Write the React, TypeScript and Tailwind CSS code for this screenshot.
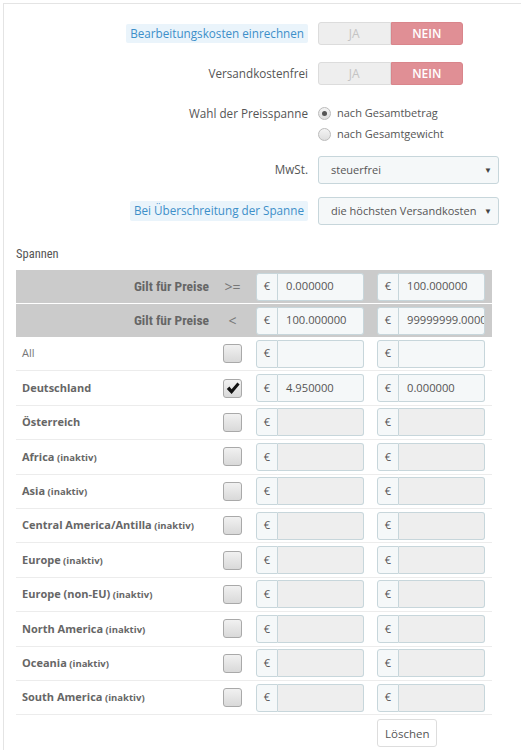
import React from 'react';

type Zone = { name: string; inactive?: boolean; plain?: boolean; checked?: boolean; from?: string; to?: string; enabled?: boolean };

const zones: Zone[] = [
  { name: 'All', plain: true, enabled: true },
  { name: 'Deutschland', checked: true, from: '4.950000', to: '0.000000', enabled: true },
  { name: 'Österreich' },
  { name: 'Africa', inactive: true },
  { name: 'Asia', inactive: true },
  { name: 'Central America/Antilla', inactive: true },
  { name: 'Europe', inactive: true },
  { name: 'Europe (non-EU)', inactive: true },
  { name: 'North America', inactive: true },
  { name: 'Oceania', inactive: true },
  { name: 'South America', inactive: true },
];

const narrow = { fontFamily: '"Liberation Sans Narrow", "Roboto Condensed", "Open Sans", sans-serif' };

function Toggle() {
  return (
    <div className="flex h-[23px] w-[145px] text-[12px]">
      <div className="flex flex-1 items-center justify-center rounded-l-[3px] border border-[#dcdcdc] bg-[#eeeeee] text-[#c4c4c4]">
        JA
      </div>
      <div className="flex flex-1 items-center justify-center rounded-r-[3px] border border-[#d9858b] bg-[#e08f95] font-semibold text-white">
        NEIN
      </div>
    </div>
  );
}

function Radio({ checked, label }: { checked?: boolean; label: string }) {
  return (
    <div className="flex h-[16px] items-center gap-[6px]">
      <span className="flex h-[13px] w-[13px] items-center justify-center rounded-full border border-[#bbb] bg-gradient-to-b from-[#f4f4f4] to-[#dedede]">
        {checked && <span className="h-[5px] w-[5px] rounded-full bg-[#555]" />}
      </span>
      <span className="text-[11px] text-[#555]">{label}</span>
    </div>
  );
}

function Select({ value }: { value: string }) {
  return (
    <div className="flex h-[28px] w-[181px] items-center justify-between whitespace-nowrap rounded-[3px] border border-[#c7d6db] bg-[#f5f8f9] pl-[12px] pr-[6px] text-[11px] text-[#555]">
      <span>{value}</span>
      <span className="text-[8px] text-[#444]">▼</span>
    </div>
  );
}

function FormRow({ label, hint, children, align = 'center' }: { label: string; hint?: boolean; children: React.ReactNode; align?: 'center' | 'start' }) {
  return (
    <div className={`flex ${align === 'center' ? 'items-center' : 'items-start'}`}>
      <div className="flex w-[304px] justify-end">
        {hint ? (
          <span className="rounded-[2px] bg-[#eaf4fb] px-[4px] py-[1px] text-[11.7px] text-[#3d8fc9]">{label}</span>
        ) : (
          <span className="text-[11.7px] text-[#555]">{label}</span>
        )}
      </div>
      <div className="ml-[10px]">{children}</div>
    </div>
  );
}

function PriceInput({ value, disabled }: { value?: string; disabled?: boolean }) {
  return (
    <div className="flex h-[28px] w-[108px]">
      <div className="flex w-[22px] items-center justify-center rounded-l-[3px] border border-[#c7d6db] bg-[#f5f8f9] text-[11px] text-[#555]">
        €
      </div>
      <div
        className={`flex flex-1 items-center overflow-hidden whitespace-nowrap rounded-r-[3px] border border-l-0 border-[#c7d6db] pl-[8px] text-[11.2px] text-[#555] ${
          disabled ? 'bg-[#eeeeee]' : 'bg-[#f5f8f9]'
        }`}
      >
        {value}
      </div>
    </div>
  );
}

function Checkbox({ checked }: { checked?: boolean }) {
  return (
    <span className="flex h-[19px] w-[19px] items-center justify-center rounded-[3px] border border-[#a9a9a9] bg-gradient-to-b from-[#f1f1f1] to-[#d9d9d9]">
      {checked && (
        <svg width="14" height="13" viewBox="0 0 14 13">
          <path d="M0.8 7 L3.4 4.6 L5.6 7.2 L11.4 0.6 L13.6 2.6 L5.6 12 Z" fill="#111" />
        </svg>
      )}
    </span>
  );
}

export default function App() {
  return (
    <div className="min-h-[750px] bg-white" style={{ fontFamily: '"Open Sans", "Noto Sans", sans-serif' }}>
      <div className="ml-[3px] mt-[3px] min-h-[747px] border-l border-t border-[#e4e4e4] pt-[18px]">
        {/* Options */}
        <FormRow label="Bearbeitungskosten einrechnen" hint>
          <Toggle />
        </FormRow>
        <div className="mt-[17px]">
          <FormRow label="Versandkostenfrei">
            <Toggle />
          </FormRow>
        </div>
        <div className="mt-[20px]">
          <FormRow label="Wahl der Preisspanne" align="start">
            <div className="flex flex-col gap-[5px]">
              <Radio checked label="nach Gesamtbetrag" />
              <Radio label="nach Gesamtgewicht" />
            </div>
          </FormRow>
        </div>
        <div className="mt-[14px]">
          <FormRow label="MwSt.">
            <Select value="steuerfrei" />
          </FormRow>
        </div>
        <div className="mt-[13px]">
          <FormRow label="Bei Überschreitung der Spanne" hint>
            <Select value="die höchsten Versandkosten" />
          </FormRow>
        </div>

        {/* Ranges */}
        <div className="ml-[12px] mt-[21px]">
          <div className="h-[16px] text-[12.5px] leading-[16px] text-[#555]" style={narrow}>
            Spannen
          </div>
          <div className="mt-[8px] w-[476px]">
            {['>=', '<'].map((op, i) => (
              <div key={op} className={`grid h-[33px] grid-cols-[199px_35px_120px_122px] items-center bg-[#cbcbcb] ${i === 0 ? 'mb-[1px]' : ''}`}>
                <div className="pr-[6px] text-right text-[13.5px] font-bold text-[#666]" style={narrow}>
                  Gilt für Preise
                </div>
                <div className="text-center text-[14px] text-[#777]">{op}</div>
                <div className="pl-[6px]">
                  <PriceInput value={i === 0 ? '0.000000' : '100.000000'} />
                </div>
                <div className="pl-[7px]">
                  <PriceInput value={i === 0 ? '100.000000' : '99999999.000000'} />
                </div>
              </div>
            ))}
            {zones.map((z) => (
              <div key={z.name} className="grid h-[34.4px] grid-cols-[199px_35px_120px_122px] items-center border-b border-[#ececec]">
                <div className={`pl-[6px] text-[11px] ${z.plain ? 'text-[#777]' : 'font-bold text-[#666]'}`}>
                  {z.name}
                  {z.inactive && <span className="text-[9.5px]"> (inaktiv)</span>}
                </div>
                <div className="flex justify-center">
                  <Checkbox checked={z.checked} />
                </div>
                <div className="pl-[6px]">
                  <PriceInput value={z.from} disabled={!z.enabled} />
                </div>
                <div className="pl-[7px]">
                  <PriceInput value={z.to} disabled={!z.enabled} />
                </div>
              </div>
            ))}
            <div className="mt-[4px] grid grid-cols-[199px_35px_120px_122px]">
              <div />
              <div />
              <div />
              <div className="pl-[7px]">
                <button className="h-[28px] rounded-[3px] border border-[#dddddd] bg-white px-[7px] text-[11.5px] text-[#555]">
                  Löschen
                </button>
              </div>
            </div>
          </div>
        </div>
      </div>
    </div>
  );
}
